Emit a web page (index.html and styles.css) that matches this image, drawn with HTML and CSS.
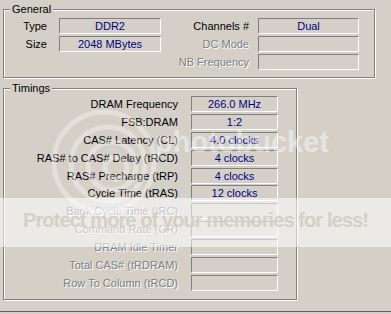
FILE: index.html
```html
<!DOCTYPE html>
<html>
<head>
<meta charset="utf-8">
<link rel="stylesheet" href="styles.css">
</head>
<body>
<div class="page">
  <div class="group general">
    <span class="legend">General</span>
    <div class="gen-grid">
      <span class="lbl lbl-l">Type</span><span class="field">DDR2</span>
      <span class="lbl lbl-r">Channels #</span><span class="field">Dual</span>
      <span class="lbl lbl-l">Size</span><span class="field">2048 MBytes</span>
      <span class="lbl lbl-r dis">DC Mode</span><span class="field"></span>
      <span></span><span></span>
      <span class="lbl lbl-r dis">NB Frequency</span><span class="field"></span>
    </div>
  </div>
  <div class="group timings">
    <span class="legend">Timings</span>
    <div class="tim-grid">
      <span class="lbl lbl-t">DRAM Frequency</span><span class="field">266.0 MHz</span>
      <span class="lbl lbl-t">FSB:DRAM</span><span class="field">1:2</span>
      <span class="lbl lbl-t">CAS# Latency (CL)</span><span class="field">4.0 clocks</span>
      <span class="lbl lbl-t">RAS# to CAS# Delay (tRCD)</span><span class="field">4 clocks</span>
      <span class="lbl lbl-t">RAS# Precharge (tRP)</span><span class="field">4 clocks</span>
      <span class="lbl lbl-t">Cycle Time (tRAS)</span><span class="field">12 clocks</span>
      <span class="lbl lbl-t dis">Bank Cycle Time (tRC)</span><span class="field"></span>
      <span class="lbl lbl-t dis">Command Rate (CR)</span><span class="field"></span>
      <span class="lbl lbl-t dis">DRAM Idle Timer</span><span class="field"></span>
      <span class="lbl lbl-t dis">Total CAS# (tRDRAM)</span><span class="field"></span>
      <span class="lbl lbl-t dis">Row To Column (tRCD)</span><span class="field"></span>
    </div>
  </div>
  <div class="bottom-line"></div>

  <div class="watermark">
    <svg class="swirl" width="391" height="314" viewBox="0 0 391 314">
      <g fill="none" stroke="#ffffff" stroke-opacity="0.35" stroke-width="5">
        <circle cx="104" cy="162" r="50"/>
        <circle cx="108" cy="164" r="37"/>
        <circle cx="112" cy="166" r="24"/>
        <circle cx="116" cy="168" r="11"/>
      </g>
    </svg>
    <span class="pb-name">photobucket</span>
    <div class="band"><span class="band-text">Protect more of your memories for less!</span></div>
  </div>
</div>
</body>
</html>
```
FILE: styles.css
```css
html, body {
  margin: 0;
  padding: 0;
}
body {
  background: #D4D0C8;
  font-family: "Liberation Sans", Arial, sans-serif;
  font-size: 11px;
  color: #000;
  width: 391px;
  height: 314px;
  overflow: hidden;
}
.page {
  position: relative;
  box-sizing: border-box;
  width: 391px;
  height: 314px;
  padding: 9px 0 0 3px;
}
.group {
  position: relative;
  box-sizing: border-box;
  border: 1px solid #808080;
  box-shadow: inset 1px 1px 0 #fff, 1px 1px 0 #fff;
}
.legend {
  position: absolute;
  top: -7px;
  left: 6px;
  padding: 0 2px;
  background: #D4D0C8;
  line-height: 13px;
}
.general {
  width: 372px;
  height: 69px;
}
.gen-grid {
  display: grid;
  grid-template-columns: 55px 102px 97px 101px;
  grid-auto-rows: 16px;
  row-gap: 2px;
  padding-top: 8px;
}
.lbl {
  text-align: right;
  line-height: 16px;
  white-space: nowrap;
}
.lbl-l { padding-right: 12px; }
.lbl-r { padding-right: 9px; }
.lbl-t { padding-right: 13px; }
.dis {
  color: #808080;
  text-shadow: 1px 1px 0 #fff;
}
.field {
  box-sizing: border-box;
  height: 16px;
  border-top: 1px solid #808080;
  border-left: 1px solid #808080;
  border-bottom: 1px solid #fff;
  border-right: 1px solid #fff;
  color: #000080;
  text-align: center;
  line-height: 14px;
  white-space: nowrap;
}
.timings {
  margin-top: 10px;
  width: 294px;
  height: 212px;
}
.tim-grid {
  display: grid;
  grid-template-columns: 187px 87px;
  grid-auto-rows: 16px;
  row-gap: 1.9px;
  padding-top: 7px;
}
.bottom-line {
  margin-top: 11px;
  margin-left: -3px;
  width: 391px;
  height: 1px;
  background: #606060;
}
.watermark {
  position: absolute;
  left: 0;
  top: 0;
  width: 391px;
  height: 314px;
  pointer-events: none;
}
.swirl {
  position: absolute;
  left: 0;
  top: 0;
}
.pb-name {
  position: absolute;
  left: 155px;
  top: 128px;
  font-family: "Liberation Sans", Arial, sans-serif;
  font-weight: bold;
  font-size: 29px;
  line-height: 29px;
  color: rgba(255, 255, 255, 0.45);
}
.band {
  position: absolute;
  left: 0;
  top: 198px;
  width: 391px;
  height: 49px;
  background: rgba(255, 255, 255, 0.55);
  text-align: center;
}
.band-text {
  display: block;
  padding-top: 12px;
  font-family: "Liberation Sans", Arial, sans-serif;
  font-weight: bold;
  font-size: 20px;
  line-height: 20px;
  letter-spacing: -0.9px;
  color: #D3CFC9;
  white-space: nowrap;
}
```
